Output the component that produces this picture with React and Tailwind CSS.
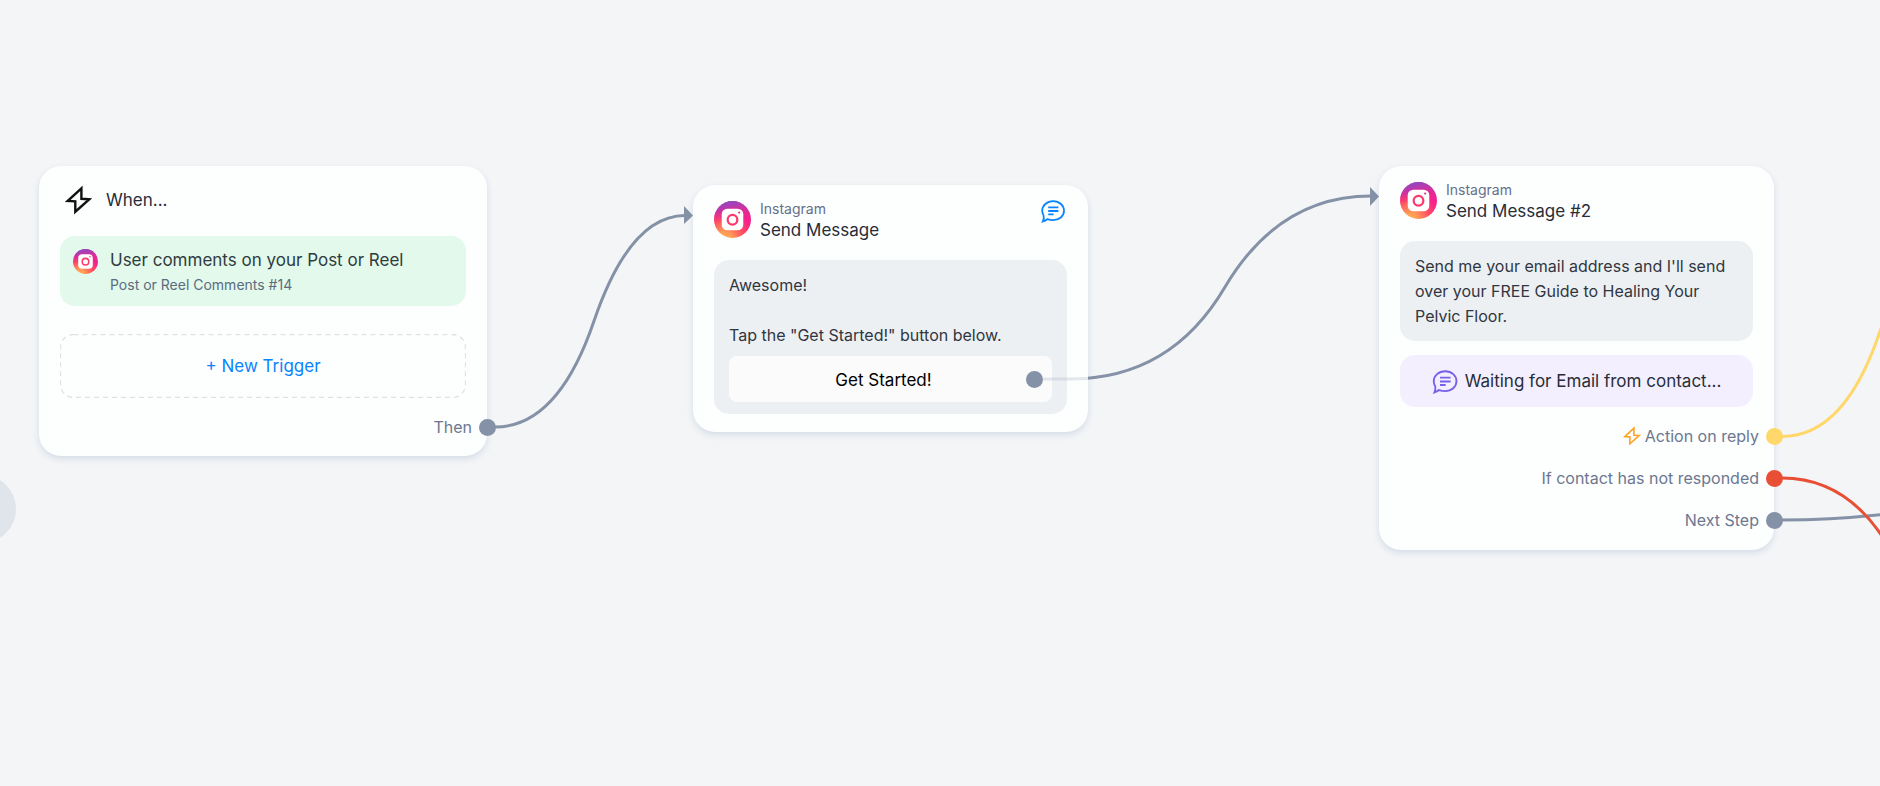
import React, { useId } from "react";

function InstagramLogo({ className }) {
  const id = useId();
  return (
    <svg viewBox="0 0 36 36" className={className} aria-hidden="true">
      <defs>
        <radialGradient id={id + "a"} cx="0.27" cy="1.05" r="1">
          <stop offset="0" stopColor="#ffb859" />
          <stop offset="0.22" stopColor="#ff9a55" />
          <stop offset="0.55" stopColor="#ff4a63" />
          <stop offset="0.8" stopColor="#f8208c" />
          <stop offset="1" stopColor="#e42a94" />
        </radialGradient>
        <linearGradient id={id + "b"} x1="0.45" y1="0" x2="0.55" y2="0.5">
          <stop offset="0" stopColor="#8a4bc4" />
          <stop offset="0.35" stopColor="#b23bb0" stopOpacity="0.8" />
          <stop offset="1" stopColor="#f8208c" stopOpacity="0" />
        </linearGradient>
      </defs>
      <circle cx="18" cy="18" r="18" fill={`url(#${id}a)`} />
      <circle cx="18" cy="18" r="18" fill={`url(#${id}b)`} />
      <rect x="7.5" y="7.5" width="21" height="21" rx="5.5" fill="#fff" />
      <circle cx="18" cy="18.2" r="4.7" fill="none" stroke="#fb3a6c" strokeWidth="2.2" />
      <circle cx="24.5" cy="11.3" r="1.1" fill="#e8338c" />
    </svg>
  );
}

function BoltIcon({ className }) {
  return (
    <svg viewBox="0 0 27 30" className={className} fill="none" stroke="currentColor" strokeWidth="2.4" strokeMiterlimit="10" aria-hidden="true">
      <path d="M16.4 3.300 2.800 15.900 10.300 16.300 10.300 26.700 24.200 14.300 16.400 13.800Z" />
    </svg>
  );
}

function ChatIcon({ className }) {
  return (
    <svg viewBox="0 0 24 23" className={className} fill="none" stroke="currentColor" strokeWidth="1.8" aria-hidden="true">
      <path d="M2.6 15.6A9.4 9.4 0 0 1 1.2 10.8C1.2 5.4 6 1.2 12.2 1.2S23 5.4 23 10.8 18.2 20.2 12.2 20.2C9.9 20.2 7.9 19.7 6.2 19.200C4.8 20.400 3.6 21 1.9 21.500C2.9 19.500 3.1 17.700 2.6 15.600Z" />
      <path d="M7.200 7.300H17.400M7.200 11H17.400M7.200 14.400H12.600" />
    </svg>
  );
}

function Card({ className, children }) {
  return (
    <section className={`absolute flex flex-col rounded-[22px] bg-[#fdfefe] px-[21px] shadow-[0_3px_6px_rgba(120,145,180,0.24)] ${className}`}>
      {children}
    </section>
  );
}

function MessageHeader({ title, action }) {
  return (
    <header className="flex h-[75px] items-start gap-[9px] pt-4">
      <InstagramLogo className="size-[37px] shrink-0" />
      <div className="flex grow flex-col">
        <span className="text-sm leading-4 text-[#64708a]">Instagram</span>
        <h2 className="text-[17px] leading-[26px] text-[#272d38]">{title}</h2>
      </div>
      {action}
    </header>
  );
}

function Output({ label, icon, dot }) {
  return (
    <div className="relative -mr-[21px] flex h-[42px] items-center justify-end gap-1 pr-[15px] text-base text-[#6b7890]">
      {icon}
      <span>{label}</span>
      <button type="button" aria-label={label} className={`absolute -right-[9px] size-[17px] rounded-full ${dot}`} />
    </div>
  );
}

export default function App() {
  return (
    <main className="relative min-h-screen overflow-hidden bg-[#f3f5f7] font-['Inter','Liberation_Sans',sans-serif]">
      <div className="absolute top-[475px] -left-[52px] size-[68px] rounded-full bg-[#e0e4eb]" />

      <svg className="absolute inset-0 size-full" fill="none" strokeWidth="3" aria-hidden="true">
        <g stroke="#8491a6">
          <path d="M487 427H495Q558 427 594 321Q630 215.500 685 215.500" />
          <path d="M1034 379H1070Q1171 379 1225 287Q1279 196 1371 196" />
        </g>
        <g fill="#8491a6">
          <path d="M684 206 693 215.500 684 224Z" />
          <path d="M1370 187 1379 196.500 1370 206Z" />
        </g>
      </svg>

      <Card className="top-[166px] left-[39px] w-[448px] pb-2">
        <header className="flex h-[68px] items-center gap-[14px] pl-[5px]">
          <BoltIcon className="h-[30px] w-[27px] text-[#111]" />
          <h2 className="text-[17px] leading-6 text-[#272d38]">When...</h2>
        </header>
        <div className="mt-[2px] flex h-[70px] items-start gap-3 rounded-[15px] bg-[#e2f9eb] px-[13px] pt-3">
          <InstagramLogo className="mt-px size-[25px] shrink-0" />
          <div className="flex flex-col">
            <h3 className="text-[17px] leading-[25px] text-[#303b40]">User comments on your Post or Reel</h3>
            <p className="text-sm leading-6 text-[#5c6c80]">Post or Reel Comments #14</p>
          </div>
        </div>
        <button type="button" className="relative mt-7 mb-2 h-16 pt-[2px] text-[17px] text-[#0a84ff]">
          <svg className="absolute inset-0 size-full" aria-hidden="true">
            <rect x="0.5" y="0.5" rx="13" fill="none" stroke="#dfe1e7" strokeWidth="1.300" strokeDasharray="5 4" className="h-[63px] w-[405px]" />
          </svg>
          + New Trigger
        </button>
        <Output label="Then" dot="bg-[#8491a6]" />
      </Card>

      <Card className="top-[185px] left-[693px] w-[395px] pb-[18px]">
        <MessageHeader
          title="Send Message"
          action={
            <button type="button" aria-label="Comments" className="mr-[2px] -mt-px text-[#0a84ff]">
              <ChatIcon className="h-[23px] w-6" />
            </button>
          }
        />
        <div className="flex flex-col rounded-[15px] bg-[#edf0f3] px-[15px] pt-[13px] pb-3 text-base leading-[25px] text-[#303641]">
          <p className="whitespace-pre-line">{'Awesome!\n\nTap the "Get Started!" button below.'}</p>
          <div className="relative mt-2 flex">
            <button type="button" className="h-[46px] grow rounded-lg bg-[#fbfbfc] pt-[2px] pr-[14px] text-[17px] text-black">Get Started!</button>
            <span className="absolute top-[15px] right-[9px] size-[17px] rounded-full bg-[#8491a6]" />
          </div>
        </div>
      </Card>

      <Card className="top-[166px] left-[1379px] w-[395px] pb-[9px]">
        <MessageHeader title="Send Message #2" />
        <p className="rounded-[15px] bg-[#edf0f3] px-[15px] pt-[13px] pb-3 text-base leading-[25px] text-[#303641]">
          Send me your email address and I'll send over your FREE Guide to Healing Your Pelvic Floor.
        </p>
        <div className="mt-[14px] mb-2 flex h-[52px] items-center justify-center gap-[7px] rounded-[15px] bg-[#f4effe] pt-[2px] text-[17px] text-[#272d38]">
          <ChatIcon className="h-6 w-[26px] text-[#7860e8]" />
          Waiting for Email from contact...
        </div>
        <Output
          label="Action on reply"
          dot="bg-[#ffd76b]"
          icon={<BoltIcon className="h-[20px] w-[18px] text-[#ffa21f]" />}
        />
        <Output label="If contact has not responded" dot="bg-[#e94f35]" />
        <Output label="Next Step" dot="bg-[#8491a6]" />
      </Card>

      <svg className="pointer-events-none absolute inset-0 size-full" fill="none" strokeWidth="3" aria-hidden="true">
        <path d="M1043 379H1070L1088 378.500" stroke="#8491a6" strokeOpacity="0.2" />
        <path d="M1782 520Q1830 520 1882 514.500" stroke="#8491a6" />
        <path d="M1782 436.500Q1846 436.500 1881 328" stroke="#ffd76b" />
        <path d="M1782 478Q1843 478 1882 536" stroke="#e94f35" />
      </svg>
    </main>
  );
}
